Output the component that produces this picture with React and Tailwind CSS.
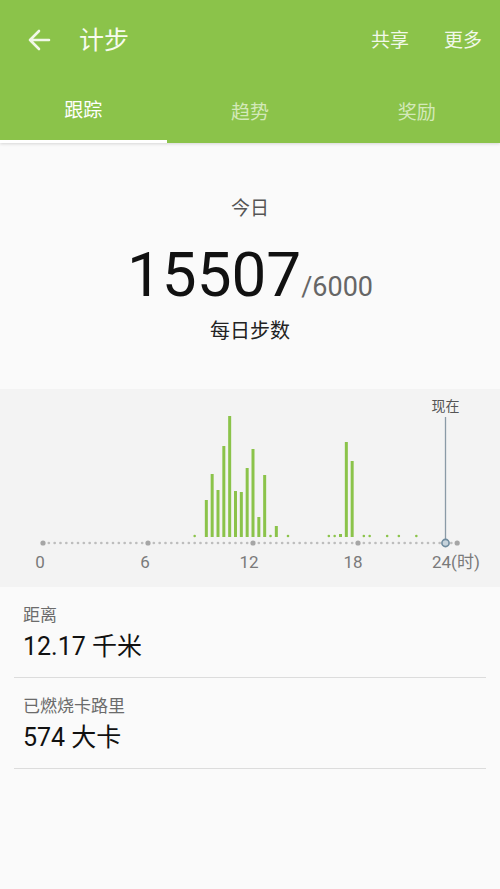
import React from "react";

const FONT = { fontFamily: 'Roboto, "Noto Sans CJK SC", sans-serif' };

const step = 105 / 18;
const x = (i) => 43 + i * step;

// step bars, every 20 minutes
const bars = {
  28: 37, 29: 63, 30: 47, 31: 91, 32: 121, 33: 46, 34: 45, 35: 69,
  36: 88, 37: 20, 38: 62, 40: 11, 51: 3, 52: 95, 53: 76,
};
const specks = [26, 39, 42, 49, 50, 55, 56, 59, 61, 64];

function Chart() {
  const ticks = [];
  for (let i = 0; i <= 71; i++) {
    if (i === 69) continue;
    const big = i % 18 === 0 || i === 71;
    ticks.push(
      <circle key={i} cx={x(i)} cy={154} r={big ? 2.6 : 1.35} fill={big ? "#a6a6a6" : "#bdbdbd"} />
    );
  }
  return (
    <svg width="500" height="198" className="block">
      {ticks}
      {Object.entries(bars).map(([s, h]) => (
        <rect key={s} x={x(+s) - 1.5} y={148 - h} width="3" height={h} fill="#8bc34a" />
      ))}
      {specks.map((s) => (
        <circle key={s} cx={x(s)} cy={147} r={1.3} fill="#8bc34a" />
      ))}
      <line x1={x(69)} y1={28} x2={x(69)} y2={154} stroke="#8a9aa6" strokeWidth="1.3" />
      <circle cx={x(69)} cy={154} r={3.6} fill="#c6d3dc" stroke="#6f8b9e" strokeWidth="1.6" />
      <text x={x(69)} y={22} textAnchor="middle" fontSize="14" fill="#555" style={FONT}>现在</text>
      {[["0", 40], ["6", 145], ["12", 249], ["18", 353]].map(([t, cx]) => (
        <text key={t} x={cx} y={179} textAnchor="middle" fontSize="17" fill="#7a7a7a" style={FONT}>{t}</text>
      ))}
      <text x={432} y={179} fontSize="17" fill="#7a7a7a" style={FONT}>24(时)</text>
    </svg>
  );
}

function Stat({ label, value }) {
  return (
    <div className="mx-[14px] border-b border-[#dcdcdc] pl-[9px] pt-[20px] pb-[18px]">
      <div className="text-[17px] leading-[17px] text-[#6b6b6b]">{label}</div>
      <div className="mt-[10px] text-[25px] leading-[25px] text-[#111]">{value}</div>
    </div>
  );
}

export default function App() {
  return (
    <div className="w-[500px] h-[889px] bg-[#fafafa] overflow-hidden" style={FONT}>
      {/* Header */}
      <div className="bg-[#8bc34a] shadow-[0_1px_3px_rgba(0,0,0,0.15)]">
        <div className="h-[80px] flex items-center">
          <svg width="24" height="24" viewBox="0 0 24 24" className="ml-[27px]">
            <path d="M22 12H3M12 3l-9 9 9 9" fill="none" stroke="#f1f8e9" strokeWidth="2.6" strokeLinecap="round" strokeLinejoin="round" />
          </svg>
          <div className="ml-[28px] text-[25px] leading-none text-[#f7fbef]">计步</div>
          <div className="ml-auto mr-[18px] flex gap-[35px] text-[19px] leading-none text-[#f1f8e9]">
            <span>共享</span>
            <span>更多</span>
          </div>
        </div>
        <div className="grid grid-cols-3 h-[63px]">
          <div className="flex flex-col">
            <div className="flex-1 flex items-center justify-center pt-[3px] text-[19px] text-white">跟踪</div>
            <div className="h-[3px] bg-white" />
          </div>
          <div className="flex items-center justify-center pt-[3px] text-[19px] text-[#d3e9b9]">趋势</div>
          <div className="flex items-center justify-center pt-[3px] text-[19px] text-[#d3e9b9]">奖励</div>
        </div>
      </div>

      {/* Today */}
      <div className="h-[246px] flex flex-col items-center pt-[56px]">
        <div className="text-[19px] leading-none text-[#555]">今日</div>
        <div className="mt-[26px] flex items-baseline">
          <span className="text-[62px] leading-none text-[#111]">15507</span>
          <span className="text-[27px] leading-none text-[#666]">/6000</span>
        </div>
        <div className="mt-[15px] text-[20px] leading-none text-[#222]">每日步数</div>
      </div>

      {/* Chart */}
      <div className="h-[198px] bg-[#f3f3f3]">
        <Chart />
      </div>

      {/* Stats */}
      <Stat label="距离" value="12.17 千米" />
      <Stat label="已燃烧卡路里" value="574 大卡" />
    </div>
  );
}
